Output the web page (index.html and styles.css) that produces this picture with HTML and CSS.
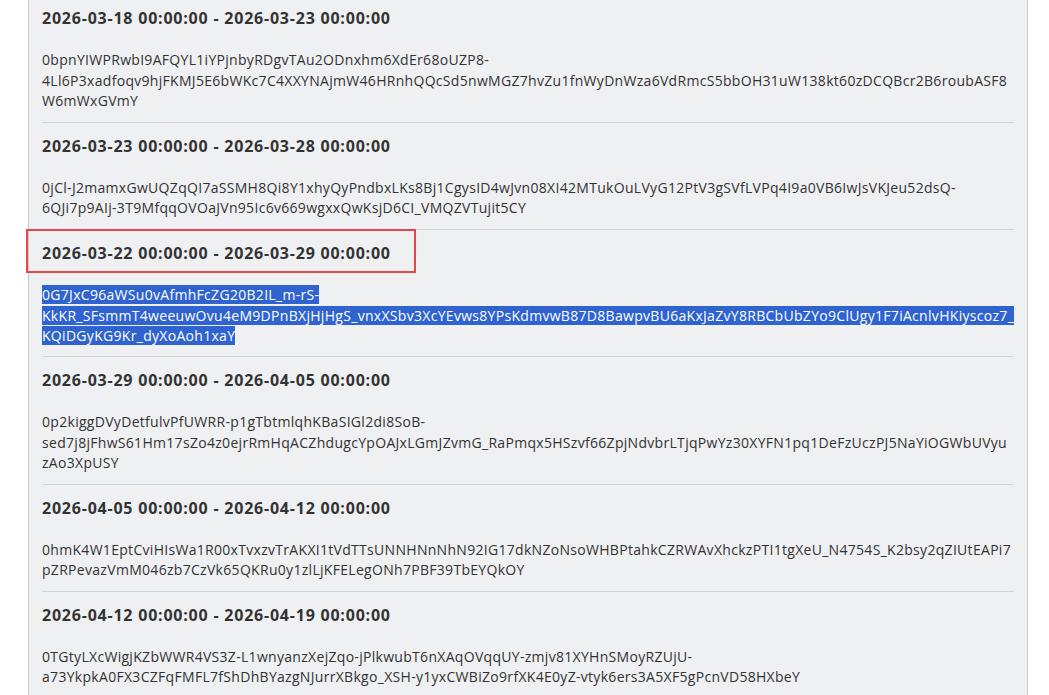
FILE: index.html
```html
<!DOCTYPE html>
<html lang="en">
<head>
<meta charset="utf-8">
<title>Keys</title>
<link rel="stylesheet" href="styles.css">
</head>
<body>
<div class="panel">
  <section class="item">
    <h3 class="range">2026-03-18 00:00:00 - 2026-03-23 00:00:00</h3>
    <p class="key">0bpnYIWPRwbI9AFQYL1iYPjnbyRDgvTAu2ODnxhm6XdEr68oUZP8-<br>4Ll6P3xadfoqv9hjFKMJ5E6bWKc7C4XXYNAjmW46HRnhQQcSd5nwMGZ7hvZu1fnWyDnWza6VdRmcS5bbOH31uW138kt60zDCQBcr2B6roubASF8<br>W6mWxGVmY</p>
  </section>
  <section class="item">
    <h3 class="range">2026-03-23 00:00:00 - 2026-03-28 00:00:00</h3>
    <p class="key">0jCl-J2mamxGwUQZqQI7aSSMH8Qi8Y1xhyQyPndbxLKs8Bj1CgysID4wJvn08XI42MTukOuLVyG12PtV3gSVfLVPq4I9a0VB6IwJsVKJeu52dsQ-<br>6QJi7p9AIj-3T9MfqqOVOaJVn95Ic6v669wgxxQwKsjD6CI_VMQZVTujit5CY</p>
  </section>
  <section class="item marked">
    <h3 class="range">2026-03-22 00:00:00 - 2026-03-29 00:00:00</h3>
    <p class="key"><span class="sel">0G7JxC96aWSu0vAfmhFcZG20B2IL_m-rS-</span><br><span class="sel sel-full">KkKR_SFsmmT4weeuwOvu4eM9DPnBXjHjHgS_vnxXSbv3XcYEvws8YPsKdmvwB87D8BawpvBU6aKxJaZvY8RBCbUbZYo9ClUgy1F7iAcnlvHKiyscoz7_</span><br><span class="sel">KQiDGyKG9Kr_dyXoAoh1xaY</span></p>
  </section>
  <section class="item">
    <h3 class="range">2026-03-29 00:00:00 - 2026-04-05 00:00:00</h3>
    <p class="key">0p2kiggDVyDetfulvPfUWRR-p1gTbtmlqhKBaSIGl2di8SoB-<br>sed7j8jFhwS61Hm17sZo4z0ejrRmHqACZhdugcYpOAJxLGmJZvmG_RaPmqx5HSzvf66ZpjNdvbrLTjqPwYz30XYFN1pq1DeFzUczPJ5NaYiOGWbUVyu<br>zAo3XpUSY</p>
  </section>
  <section class="item">
    <h3 class="range">2026-04-05 00:00:00 - 2026-04-12 00:00:00</h3>
    <p class="key">0hmK4W1EptCviHIsWa1R00xTvxzvTrAKXI1tVdTTsUNNHNnNhN92IG17dkNZoNsoWHBPtahkCZRWAvXhckzPTI1tgXeU_N4754S_K2bsy2qZIUtEAPi7<br>pZRPevazVmM046zb7CzVk65QKRu0y1zlLjKFELegONh7PBF39TbEYQkOY</p>
  </section>
  <section class="item">
    <h3 class="range">2026-04-12 00:00:00 - 2026-04-19 00:00:00</h3>
    <p class="key">0TGtyLXcWigjKZbWWR4VS3Z-L1wnyanzXejZqo-jPlkwubT6nXAqOVqqUY-zmjv81XYHnSMoyRZUjU-<br>a73YkpkA0FX3CZFqFMFL7fShDhBYazgNJurrXBkgo_XSH-y1yxCWBiZo9rfXK4E0yZ-vtyk6ers3A5XF5gPcnVD58HXbeY</p>
  </section>
</div>
</body>
</html>
```
FILE: styles.css
```css
html, body {
  margin: 0;
  padding: 0;
  background: #ffffff;
}

body {
  font-family: "Open Sans", "Noto Sans", "Liberation Sans", sans-serif;
  color: #333333;
  overflow: hidden;
}

.panel {
  margin: -5px 0 0 28px;
  width: 1000px;
  box-sizing: border-box;
  background: #eff0f2;
  border-left: 1px solid #c9c9c9;
  border-right: 1px solid #c9c9c9;
  padding: 0 13px 0 13px;
}

.item {
  position: relative;
  padding: 11px 0 10px 0;
  border-bottom: 1px solid #d2d3d5;
}

.range {
  margin: 0;
  font-size: 16px;
  line-height: 24px;
  font-weight: 700;
  letter-spacing: 0.78px;
  color: #333333;
}

.key {
  margin: 20px 0 0 0;
  font-size: 14px;
  line-height: 20.5px;
  letter-spacing: 0.3px;
  white-space: nowrap;
  color: #333333;
}

.sel {
  background: #2f63d0;
  color: #ffffff;
}

.sel-full {
  display: inline-block;
  vertical-align: top;
  width: 100%;
  height: 19px;
  line-height: 19px;
  margin-top: 1px;
}

.marked::after {
  content: "";
  position: absolute;
  left: -16px;
  top: -1px;
  width: 390px;
  height: 44px;
  box-sizing: border-box;
  border: 2px solid #e4474c;
  pointer-events: none;
}
```
